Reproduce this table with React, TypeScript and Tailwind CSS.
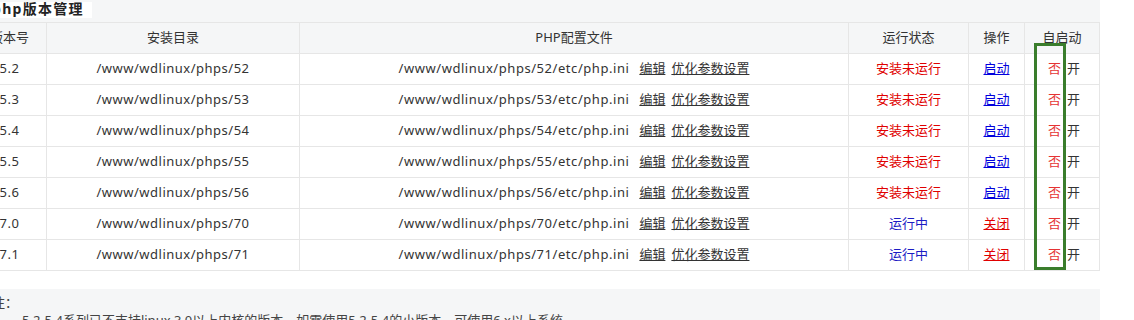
const versions = [
  { v: "5.2", n: "52", running: false },
  { v: "5.3", n: "53", running: false },
  { v: "5.4", n: "54", running: false },
  { v: "5.5", n: "55", running: false },
  { v: "5.6", n: "56", running: false },
  { v: "7.0", n: "70", running: true },
  { v: "7.1", n: "71", running: true },
];

const cols = "grid grid-cols-[74px_253px_549px_120px_56px_75px]";
const cell = "flex items-center justify-center border-r border-[#e6e6e6] whitespace-nowrap";

const App = () => {
  return (
    <div
      className="relative ml-[-27px] w-[1127px] bg-white text-[13px] text-[#333]"
      style={{ fontFamily: '"Noto Sans", "Noto Sans CJK SC", sans-serif' }}
    >
      <div className="h-[22px] bg-[#f5f6f7]">
        <div className="inline-block h-[16px] bg-white pl-[19px] pr-[8px] text-[14px] font-bold leading-[13px] tracking-[1.3px] text-[#222]">
          php版本管理
        </div>
      </div>

      <div className="border-t border-[#e6e6e6]">
        <div className={`${cols} h-[31px] border-b border-[#e6e6e6] bg-[#f5f6f7]`}>
          <div className={cell}>版本号</div>
          <div className={cell}>安装目录</div>
          <div className={cell}>PHP配置文件</div>
          <div className={cell}>运行状态</div>
          <div className={cell}>操作</div>
          <div className={cell}>自启动</div>
        </div>
        {versions.map((row) => (
          <div key={row.v} className={`${cols} h-[31px] border-b border-[#e6e6e6]`}>
            <div className={`${cell} tracking-[0.5px]`}>{row.v}</div>
            <div className={`${cell} tracking-[0.5px]`}>/www/wdlinux/phps/{row.n}</div>
            <div className={`${cell} gap-[10px]`}>
              <span className="tracking-[0.55px]">/www/wdlinux/phps/{row.n}/etc/php.ini</span>
              <span className="flex gap-[6px]">
                <a className="underline">编辑</a>
                <a className="underline">优化参数设置</a>
              </span>
            </div>
            <div className={cell}>
              {row.running ? (
                <span className="text-[#1c1cc4]">运行中</span>
              ) : (
                <span className="text-[#e00000]">安装未运行</span>
              )}
            </div>
            <div className={cell}>
              {row.running ? (
                <a className="text-[#e00000] underline">关闭</a>
              ) : (
                <a className="text-[#0000dd] underline">启动</a>
              )}
            </div>
            <div className={`${cell} gap-[6px] pl-[4px]`}>
              <span className="text-[#e53333]">否</span>
              <a>开</a>
            </div>
          </div>
        ))}
      </div>

      <div className="mt-[18px] h-[40px] bg-[#f5f6f7] pl-[19px] pt-[4px] leading-[18px] text-[#444]">
        <div>注：</div>
        <div className="pl-[30px]">5.2-5.4系列已不支持linux 3.0以上内核的版本，如需使用5.2-5.4的小版本，可使用6.x以上系统</div>
      </div>

      {/* annotation box */}
      <div className="pointer-events-none absolute left-[1061px] top-[43px] h-[227px] w-[32px] border-[3px] border-[#3a7d2c]" />
    </div>
  );
};

export default App;
